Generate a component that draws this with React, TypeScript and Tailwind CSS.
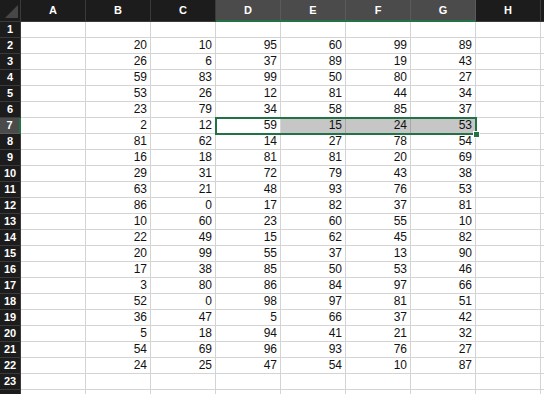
import React from 'react';

const cols = ['A', 'B', 'C', 'D', 'E', 'F', 'G', 'H'];
const selCols = ['D', 'E', 'F', 'G'];

// B..G values for rows 2..22
const data: number[][] = [
  [20, 10, 95, 60, 99, 89],
  [26, 6, 37, 89, 19, 43],
  [59, 83, 99, 50, 80, 27],
  [53, 26, 12, 81, 44, 34],
  [23, 79, 34, 58, 85, 37],
  [2, 12, 59, 15, 24, 53],
  [81, 62, 14, 27, 78, 54],
  [16, 18, 81, 81, 20, 69],
  [29, 31, 72, 79, 43, 38],
  [63, 21, 48, 93, 76, 53],
  [86, 0, 17, 82, 37, 81],
  [10, 60, 23, 60, 55, 10],
  [22, 49, 15, 62, 45, 82],
  [20, 99, 55, 37, 13, 90],
  [17, 38, 85, 50, 53, 46],
  [3, 80, 86, 84, 97, 66],
  [52, 0, 98, 97, 81, 51],
  [36, 47, 5, 66, 37, 42],
  [5, 18, 94, 41, 21, 32],
  [54, 69, 96, 93, 76, 27],
  [24, 25, 47, 54, 10, 87],
];

const rows = Array.from({ length: 24 }, (_, i) => i + 1);

export default function App() {
  const cellValue = (row: number, colIdx: number) => {
    if (row < 2 || row > 22 || colIdx < 1 || colIdx > 6) return '';
    return data[row - 2][colIdx - 1];
  };

  return (
    <div className="w-[544px] h-[394px] overflow-hidden bg-white font-['Liberation_Sans',Arial,sans-serif] text-[12px] text-[#111] relative">
      {/* column headers */}
      <div className="flex h-[22px]">
        <div className="w-[21px] shrink-0 bg-[#1c1c1c] border-r border-b border-[#3a3a3a] relative">
          <div className="absolute left-[5px] top-[5px] w-[13px] h-[13px] bg-[#474747] [clip-path:polygon(100%_0,100%_100%,0_100%)]" />
        </div>
        {cols.map((c) => {
          const sel = selCols.includes(c);
          return (
            <div
              key={c}
              className={
                sel
                  ? 'w-[65px] shrink-0 bg-[#4b4b4b] border-r border-[#5a5a5a] border-b-2 border-b-[#217346] flex items-center justify-center text-white font-bold text-[11px]'
                  : 'w-[65px] shrink-0 bg-[#1c1c1c] border-r border-b border-[#3a3a3a] flex items-center justify-center text-white font-bold text-[11px]'
              }
            >
              {c}
            </div>
          );
        })}
        <div className="flex-1 bg-[#1c1c1c] border-b border-[#3a3a3a]" />
      </div>

      {/* rows */}
      {rows.map((r) => {
        const selRow = r === 7;
        return (
          <div key={r} className="flex h-[16px]">
            <div
              className={
                selRow
                  ? 'w-[21px] shrink-0 bg-[#4b4b4b] border-b border-[#5a5a5a] border-r-2 border-r-[#217346] flex items-center justify-center text-white font-bold text-[11px]'
                  : 'w-[21px] shrink-0 bg-[#1c1c1c] border-r border-b border-[#3a3a3a] flex items-center justify-center text-white font-bold text-[11px]'
              }
            >
              {r < 24 ? r : ''}
            </div>
            {cols.map((c, ci) => {
              const gray = selRow && ci >= 4 && ci <= 6;
              return (
                <div
                  key={c}
                  className={
                    gray
                      ? 'w-[65px] shrink-0 bg-[#c6c6c6] border-r border-b border-[#a8a8a8] flex items-end justify-end pr-[3px] leading-[15px]'
                      : 'w-[65px] shrink-0 border-r border-b border-[#d4d4d4] flex items-end justify-end pr-[3px] leading-[15px]'
                  }
                >
                  {cellValue(r, ci)}
                </div>
              );
            })}
            <div className="flex-1 border-b border-[#d4d4d4]" />
          </div>
        );
      })}

      {/* selection outline D7:G7 */}
      <div className="absolute left-[215px] top-[117px] w-[262px] h-[18px] border-2 border-[#217346] pointer-events-none" />
      {/* fill handle */}
      <div className="absolute left-[473px] top-[131px] w-[7px] h-[7px] bg-[#217346] border border-white" />
    </div>
  );
}
